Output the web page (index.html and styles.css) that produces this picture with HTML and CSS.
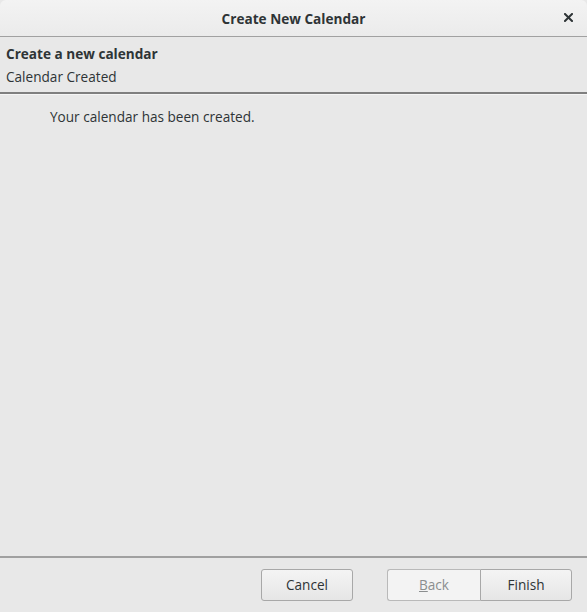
FILE: index.html
```html
<!DOCTYPE html>
<html>
<head>
<meta charset="utf-8">
<link rel="stylesheet" href="styles.css">
</head>
<body>
<div class="window">
  <header class="titlebar">
    <div class="title">Create New Calendar</div>
    <div class="close" aria-label="Close">
      <svg width="9" height="9" viewBox="0 0 9 9"><path d="M1 1 L8 8 M8 1 L1 8" stroke="#2e3436" stroke-width="2" stroke-linecap="square"/></svg>
    </div>
  </header>
  <section class="page-header">
    <div class="page-title">Create a new calendar</div>
    <div class="page-subtitle">Calendar Created</div>
  </section>
  <main class="content">
    <p class="message">Your calendar has been created.</p>
  </main>
  <footer class="actions">
    <button class="btn">Cancel</button>
    <div class="nav">
      <button class="btn btn-disabled"><u>B</u>ack</button>
      <button class="btn">Finish</button>
    </div>
  </footer>
</div>
</body>
</html>
```
FILE: styles.css
```css
* { box-sizing: border-box; }
html, body { margin: 0; padding: 0; }
body {
  width: 587px;
  height: 612px;
  background: #e8e8e8;
  font-family: "Open Sans", "DejaVu Sans", sans-serif;
  font-size: 13.6px;
  color: #2e3436;
  overflow: hidden;
}
.window {
  display: flex;
  flex-direction: column;
  height: 612px;
}
.titlebar {
  position: relative;
  height: 37px;
  flex: none;
  display: flex;
  align-items: center;
  justify-content: center;
  background: linear-gradient(#f3f3f3, #ebebeb);
  border-bottom: 1px solid #a1a1a1;
  border-top-right-radius: 6px;
  border-top-left-radius: 6px;
}
.title {
  font-weight: bold;
  font-size: 13.6px;
  color: #2e3436;
}
.close {
  position: absolute;
  right: 14px;
  top: 13px;
  width: 9px;
  height: 9px;
  display: flex;
}
.page-header {
  flex: none;
  padding: 8px 6px 0 6px;
  height: 57px;
  border-bottom: 2px solid #7f7f7f;
  box-shadow: 0 1px 0 #f5f5f5;
}
.page-title {
  font-weight: bold;
  line-height: 18px;
}
.page-subtitle {
  line-height: 18px;
  margin-top: 5px;
}
.content {
  flex: 1;
  padding: 14px 50px;
}
.message {
  margin: 0;
  line-height: 18px;
}
.actions {
  flex: none;
  height: 56px;
  border-top: 2px solid #a0a0a0;
  display: flex;
  justify-content: space-between;
  align-items: flex-start;
  padding: 11px 15px 0 261px;
}
.nav { display: flex; }
.btn {
  font-family: inherit;
  font-size: 13.6px;
  color: #2e3436;
  width: 92px;
  height: 32px;
  border: 1px solid #a8a8a8;
  border-radius: 3px;
  background: linear-gradient(#f4f4f4, #e6e6e6);
  padding: 0 0 2px 0;
  margin: 0;
}
.btn-disabled {
  width: 93px;
  color: #8b8e8f;
  background: #f3f3f3;
  border-color: #b9b9b9;
  border-top-right-radius: 0;
  border-bottom-right-radius: 0;
  border-right: none;
}
.btn-disabled + .btn {
  border-top-left-radius: 0;
  border-bottom-left-radius: 0;
}
```
